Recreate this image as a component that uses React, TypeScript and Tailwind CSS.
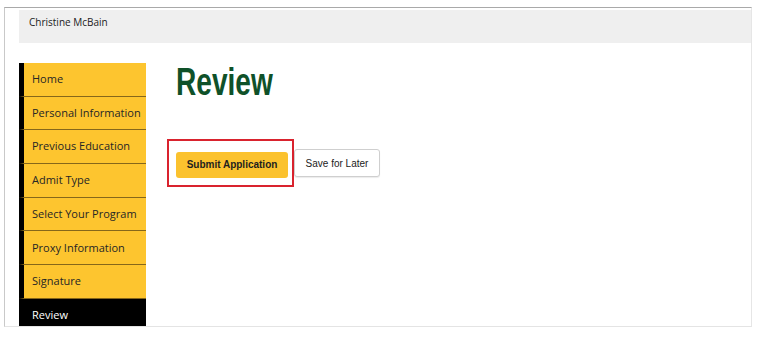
import React from "react";

const items = [
  "Home",
  "Personal Information",
  "Previous Education",
  "Admit Type",
  "Select Your Program",
  "Proxy Information",
  "Signature",
];

export default function App() {
  return (
    <div className="w-[760px] h-[337px] bg-white overflow-hidden" style={{ fontFamily: "'Open Sans', 'Noto Sans', sans-serif" }}>
      <div className="ml-[4px] mt-[7px] w-[748px] h-[320px] overflow-hidden border-t border-t-[#a9a9a9] border-l border-l-[#c9c9c9] border-r border-r-[#e6e6e6] border-b border-b-[#e4e4e4] pl-[14px] pt-[2px]">
        <div className="h-[33px] bg-[#efefef] flex items-center pl-[10px] pb-[9px] text-[10px] text-[#222]">
          Christine McBain
        </div>
        <div className="flex mt-[20px]">
          <div className="w-[127px] shrink-0 flex flex-col">
            {items.map((t) => (
              <div
                key={t}
                className="h-[33.7px] flex items-center pl-[8px] border-l-[5px] border-l-black bg-[#fdc52f] border-b border-b-[#86671a] text-[11px] text-[#262626]"
              >
                {t}
              </div>
            ))}
            <div className="h-[33px] flex items-center pl-[13px] bg-black text-[11px] text-white">
              Review
            </div>
          </div>
          <div className="ml-[30px] flex flex-col items-start">
            <h1
              className="text-[39px] leading-[38px] font-bold text-[#0f5129] origin-left scale-x-[0.72]"
              style={{ fontFamily: "'Liberation Sans', Arial, sans-serif" }}
            >
              Review
            </h1>
            <div className="mt-[38px] -ml-[9px] flex items-center" style={{ fontFamily: "'Liberation Sans', Arial, sans-serif" }}>
              <div className="border-2 border-[#d9232e] w-[127px] h-[48px] pl-[7px] pt-[10px]">
                <button className="w-[112px] h-[26px] rounded-[3px] bg-[#fbc22e] text-[10px] font-bold text-[#1e1e1e]">
                  Submit Application
                </button>
              </div>
              <button className="w-[86px] h-[28px] rounded-[3px] bg-white border border-[#cfcfcf] text-[10px] text-[#222] shadow-[0_1px_1px_rgba(0,0,0,0.08)]">
                Save for Later
              </button>
            </div>
          </div>
        </div>
      </div>
    </div>
  );
}
